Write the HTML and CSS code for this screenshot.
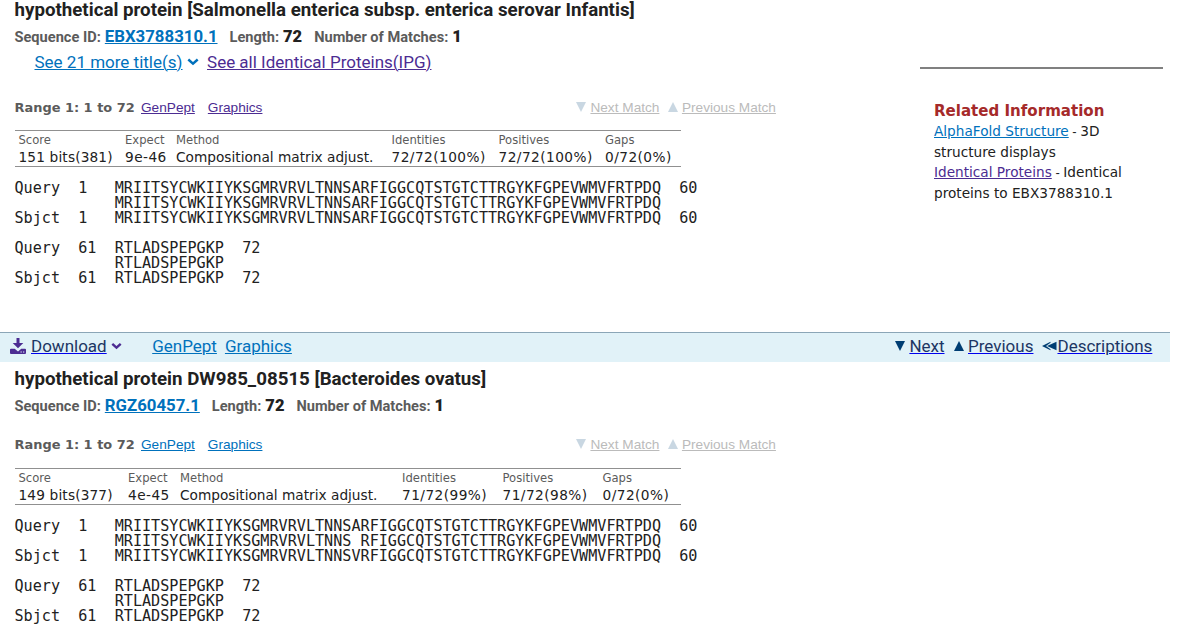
FILE: index.html
```
<!DOCTYPE html>
<html lang="en">
<head>
<meta charset="utf-8">
<title>Alignments</title>
<link rel="stylesheet" href="styles.css">
</head>
<body>
<div class="page">
  <section class="hit first">
    <div class="alignment">
      <h2 class="title">hypothetical protein [Salmonella enterica subsp. enterica serovar Infantis]</h2>
      <div class="meta">
        <span class="pair"><label>Sequence ID:</label><a class="link" href="#">EBX3788310.1</a></span>
        <span class="pair"><label>Length:</label><b>72</b></span>
        <span class="pair"><label>Number of Matches:</label><b>1</b></span>
      </div>
      <div class="more">
        <a class="link" href="#">See 21 more title(s)</a>
        <svg class="chev blue" width="12" height="8" viewBox="0 0 12 8"><path d="M1.300 1.500 6 5.700l4.700-4.200"/></svg>
        <a class="visited ipg" href="#">See all Identical Proteins(IPG)</a>
      </div>
      <div class="range">
        <span class="range-name">Range 1: 1 to 72</span>
        <a class="visited genpept" href="#">GenPept</a>
        <a class="visited" href="#">Graphics</a>
        <div class="match-nav">
          <svg width="10" height="10" viewBox="0 0 10 10"><path d="M0 0h10L5 10z"/></svg><a class="next" href="#">Next Match</a>
          <svg width="10" height="10" viewBox="0 0 10 10"><path d="M0 10h10L5 0z"/></svg><a class="prev" href="#">Previous Match</a>
        </div>
      </div>
      <div class="scores scores-a">
        <div><span>Score</span><em class="bits">151 bits(381)</em></div>
        <div><span>Expect</span><em>9e-46</em></div>
        <div><span>Method</span><em class="method">Compositional matrix adjust.</em></div>
        <div><span>Identities</span><em>72/72(100%)</em></div>
        <div><span>Positives</span><em>72/72(100%)</em></div>
        <div><span>Gaps</span><em>0/72(0%)</em></div>
      </div>
<pre class="seq">Query  1   MRIITSYCWKIIYKSGMRVRVLTNNSARFIGGCQTSTGTCTTRGYKFGPEVWMVFRTPDQ  60
           MRIITSYCWKIIYKSGMRVRVLTNNSARFIGGCQTSTGTCTTRGYKFGPEVWMVFRTPDQ
Sbjct  1   MRIITSYCWKIIYKSGMRVRVLTNNSARFIGGCQTSTGTCTTRGYKFGPEVWMVFRTPDQ  60

Query  61  RTLADSPEPGKP  72
           RTLADSPEPGKP
Sbjct  61  RTLADSPEPGKP  72</pre>
    </div>
    <aside class="related">
      <h3>Related Information</h3>
      <p><a class="link" href="#">AlphaFold Structure</a><i> - </i>3D<br>structure displays</p>
      <p><a class="visited" href="#">Identical Proteins</a><i> - </i>Identical<br>proteins to EBX3788310.1</p>
    </aside>
  </section>

  <nav class="toolbar">
    <svg class="dl" width="16" height="16" viewBox="0 0 16 16"><path d="M6.500 0h3v5h3.800L8 10.200 2.700 5h3.800z"/><path fill-rule="evenodd" d="M1 10.700h3.700L8 13.400l3.300-2.700H15q1 0 1 1V15q0 1-1 1H1q-1 0-1-1v-3.300q0-1 1-1zM10.500 13.400v1.200h1.300v-1.200zM13 13.400v1.200h1.300v-1.200z"/></svg>
    <a class="navy download" href="#">Download</a>
    <svg class="chev purple" width="11" height="8" viewBox="0 0 11 8"><path d="M1.300 1.800l4.200 3.800L9.700 1.800"/></svg>
    <a class="link tb-gen" href="#">GenPept</a>
    <a class="link" href="#">Graphics</a>
    <div class="hit-nav">
      <svg width="10" height="10" viewBox="0 0 10 10"><path d="M0 0h10L5 10z"/></svg><a class="navy n1" href="#">Next</a>
      <svg width="10" height="10" viewBox="0 0 10 10"><path d="M0 10h10L5 0z"/></svg><a class="navy n2" href="#">Previous</a>
      <svg width="15" height="10" viewBox="0 0 15 10"><path d="M0 5 8.500 .8v1L4 5l4.500 3.200v1z"/><path d="M5 5l9.500-4.200v8.400z"/></svg><a class="navy n3" href="#">Descriptions</a>
    </div>
  </nav>

  <section class="hit second">
    <div class="alignment">
      <h2 class="title">hypothetical protein DW985_08515 [Bacteroides ovatus]</h2>
      <div class="meta">
        <span class="pair"><label>Sequence ID:</label><a class="link" href="#">RGZ60457.1</a></span>
        <span class="pair"><label>Length:</label><b>72</b></span>
        <span class="pair"><label>Number of Matches:</label><b>1</b></span>
      </div>
      <div class="range">
        <span class="range-name">Range 1: 1 to 72</span>
        <a class="link genpept" href="#">GenPept</a>
        <a class="link" href="#">Graphics</a>
        <div class="match-nav">
          <svg width="10" height="10" viewBox="0 0 10 10"><path d="M0 0h10L5 10z"/></svg><a class="next" href="#">Next Match</a>
          <svg width="10" height="10" viewBox="0 0 10 10"><path d="M0 10h10L5 0z"/></svg><a class="prev" href="#">Previous Match</a>
        </div>
      </div>
      <div class="scores scores-b">
        <div><span>Score</span><em class="bits">149 bits(377)</em></div>
        <div><span>Expect</span><em>4e-45</em></div>
        <div><span>Method</span><em class="method">Compositional matrix adjust.</em></div>
        <div><span>Identities</span><em>71/72(99%)</em></div>
        <div><span>Positives</span><em>71/72(98%)</em></div>
        <div><span>Gaps</span><em>0/72(0%)</em></div>
      </div>
<pre class="seq">Query  1   MRIITSYCWKIIYKSGMRVRVLTNNSARFIGGCQTSTGTCTTRGYKFGPEVWMVFRTPDQ  60
           MRIITSYCWKIIYKSGMRVRVLTNNS RFIGGCQTSTGTCTTRGYKFGPEVWMVFRTPDQ
Sbjct  1   MRIITSYCWKIIYKSGMRVRVLTNNSVRFIGGCQTSTGTCTTRGYKFGPEVWMVFRTPDQ  60

Query  61  RTLADSPEPGKP  72
           RTLADSPEPGKP
Sbjct  61  RTLADSPEPGKP  72</pre>
    </div>
  </section>
</div>
</body>
</html>
```
FILE: styles.css
```
* { box-sizing: border-box; }
html, body { margin: 0; background: #fff; overflow: hidden; }
body { color: #212121; font-family: Roboto, sans-serif; font-size: 17px; }
.page { width: 1179px; height: 638px; overflow: hidden; }
a { text-decoration: underline; text-decoration-thickness: 1px; white-space: nowrap; }
.link { color: #0071bc; }
.visited { color: #4c2c92; }
.navy { color: #1c3664; text-decoration-color: #0000ee; }

.hit { display: flex; padding-left: 14.5px; }
.first { height: 332px; }
.alignment { width: 905.5px; }

.title { margin: 0; height: 22px; font-size: 18.720px; line-height: 20px; font-weight: 700; white-space: nowrap; }
.meta { display: flex; gap: 12px; height: 28px; line-height: 29px; font-weight: 700; white-space: nowrap; }
.meta label { margin-right: 4px; color: #5b5b5b; font-size: 14.600px; }
.meta a { font-size: 16.800px; }
.meta b { font-size: 16.500px; }
.more { display: flex; align-items: center; height: 24px; padding-left: 20px; }
.ipg { margin-left: 8px; }
.chev { margin-left: 5px; fill: none; stroke-width: 2.4; }
.more .chev { margin-left: 4.500px; }
.blue { stroke: #0071bc; }
.purple { stroke: #4c2c92; }

.range { display: flex; align-items: center; height: 20px; margin-top: 23px; font-family: "Liberation Sans", sans-serif; font-size: 13.650px; white-space: nowrap; }
.range-name { width: 126.500px; color: #5b5b5b; font: 700 12.950px "DejaVu Sans", sans-serif; }
.genpept { margin-right: 13px; }
.match-nav { display: flex; align-items: center; margin-left: 314px; color: #bbb; }
.match-nav a { color: #bbb; margin-left: 4px; }
.match-nav .next { margin-right: 8.500px; }
.match-nav svg { fill: #c9d7e2; }

.scores { display: grid; width: 666px; height: 37px; margin-top: 13px; padding-left: 4px; border-top: 1px solid #909090; border-bottom: 1px solid #909090; font-family: "DejaVu Sans", sans-serif; white-space: nowrap; }
.scores-a { grid-template-columns: 106.500px 51px 215.500px 107px 106.500px 70px; }
.scores-b { grid-template-columns: 109.500px 52px 222px 100.500px 100px 70px; }
.scores span, .scores em { display: block; font-style: normal; }
.scores span { color: #5b5b5b; font-size: 11.600px; line-height: 19px; }
.scores em { font-size: 13.700px; line-height: 14.500px; letter-spacing: .45px; }
.scores .bits { letter-spacing: .15px; }
.scores .method { letter-spacing: 0; }

.seq { margin: 13.600px 0 0; font: 15.130px/15.100px "DejaVu Sans Mono", monospace; }

.related { width: 243px; height: 160px; margin-top: 67px; padding: 32px 0 0 14px; border-top: 2px solid #808080; font: 13.650px/20.600px "DejaVu Sans", sans-serif; white-space: nowrap; }
.related h3 { margin: 0; color: #a52a2a; font-size: 15.050px; line-height: 20px; }
.related p { margin: 0; }
.related i { font: 13px "Liberation Sans", sans-serif; }

.toolbar { display: flex; align-items: center; width: 1170px; height: 30px; padding: 0 17.700px 3px 10px; border-top: 1px solid #8ba6b7; background: #e1f2f8; }
.dl { fill: #4c2c92; }
.download { margin-left: 5px; }
.toolbar .purple { margin-left: 4.500px; }
.tb-gen { margin: 0 8px 0 30px; }
.hit-nav { display: flex; align-items: center; margin-left: auto; }
.hit-nav svg { fill: #003e73; }
.n1, .n2 { margin-left: 4.500px; margin-right: 9px; }

.second { padding-top: 7px; }
.second .range { margin-top: 15px; }
.second .scores { margin-top: 14px; }
```
